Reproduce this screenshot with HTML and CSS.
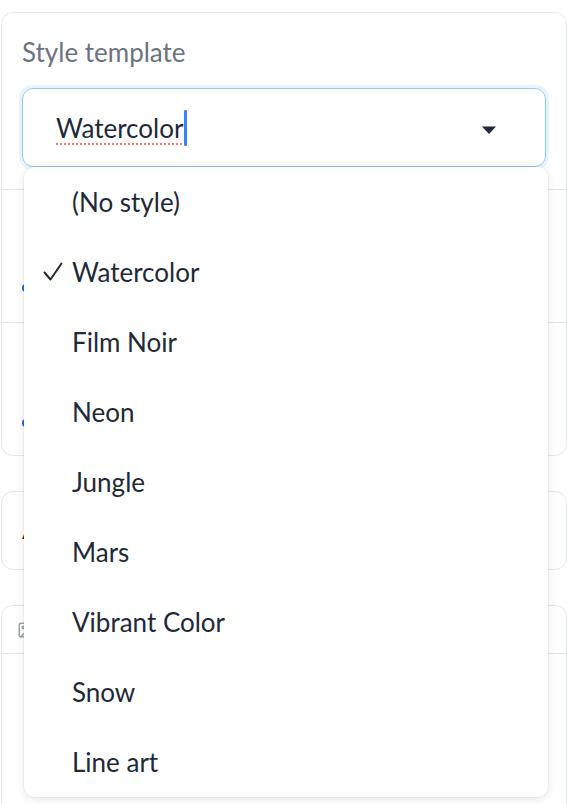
FILE: index.html
```html
<!DOCTYPE html>
<html lang="en">

<head>
  <meta charset="utf-8">
  <title>Style template</title>
  <link rel="stylesheet" href="styles.css">
</head>

<body>
  <div class="page">
    <div class="group">
      <div class="block block-select">
        <label class="block-label">Style template</label>
        <div class="select-wrap">
          <div class="select-input">
            <span class="select-value">Watercolor</span><span class="caret"></span>
            <svg class="select-arrow" width="16" height="9" viewBox="0 0 16 9">
              <path d="M1 0.5 L15 0.5 L8 8 Z" fill="#1f2937"/>
            </svg>
          </div>
          <ul class="menu">
            <li class="menu-item">(No style)</li>
            <li class="menu-item selected">
              <svg class="check" width="20" height="20" viewBox="0 0 20 20">
                <polyline points="1.5,10.5 7.5,17.5 18.5,1.5" fill="none" stroke="#1f2937" stroke-width="2" stroke-linecap="round" stroke-linejoin="round"/>
              </svg>
              Watercolor
            </li>
            <li class="menu-item">Film Noir</li>
            <li class="menu-item">Neon</li>
            <li class="menu-item">Jungle</li>
            <li class="menu-item">Mars</li>
            <li class="menu-item">Vibrant Color</li>
            <li class="menu-item">Snow</li>
            <li class="menu-item">Line art</li>
          </ul>
        </div>
      </div>
      <div class="block block-slider">
        <div class="slider-track"></div>
      </div>
      <div class="block block-slider">
        <div class="slider-track"></div>
      </div>
    </div>

    <div class="card card-accordion">
      <span class="accordion-title">Advanced options</span>
    </div>

    <div class="card card-image">
      <div class="image-label">
        <svg width="18" height="18" viewBox="0 0 24 24" fill="none" stroke="#9ca3af" stroke-width="2" stroke-linecap="round" stroke-linejoin="round">
          <rect x="3" y="3" width="18" height="18" rx="2"/>
          <circle cx="8.5" cy="8.5" r="1.5"/>
          <polyline points="21 15 16 10 5 21"/>
        </svg>
      </div>
    </div>
  </div>
</body>

</html>
```

FILE: styles.css
```css
* {
  box-sizing: border-box;
}

body {
  margin: 0;
  background: #fff;
  font-family: Lato, "Noto Sans", sans-serif;
  color: #1f2937;
  overflow: hidden;
}

.page {
  padding: 12px 0 0 1px;
}

.group,
.card {
  border: 1px solid #e5e7eb;
  border-radius: 12px;
  background: #fff;
}

.block {
  padding: 0 20px;
}

.block + .block {
  border-top: 1px solid #e5e7eb;
}

.block-select {
  padding-top: 24px;
  padding-bottom: 22px;
}

.block-label {
  display: block;
  height: 30px;
  line-height: 30px;
  font-size: 26px;
  color: #6b7280;
}

.select-wrap {
  position: relative;
  margin-top: 21px;
}

.select-input {
  display: flex;
  align-items: center;
  height: 79px;
  padding: 0 50px 0 33px;
  border: 1.5px solid #93c5fd;
  border-radius: 11px;
  box-shadow: 0 0 0 3px rgba(219, 234, 254, 0.6);
  font-size: 26px;
}

.select-value {
  text-decoration: underline dotted #f87171;
  text-decoration-thickness: 2px;
  text-underline-offset: 6px;
}

.caret {
  display: inline-block;
  width: 3px;
  height: 36px;
  margin-left: 1px;
  border-radius: 1px;
  background: #3b82f6;
}

.select-arrow {
  margin: 6px -2px 0 auto;
}

.menu {
  position: absolute;
  top: 100%;
  left: 2px;
  right: -2px;
  margin: 0;
  padding: 0;
  list-style: none;
  background: #fff;
  border-radius: 11px;
  box-shadow: 0 2px 10px rgba(0, 0, 0, 0.1), 0 0 0 1px rgba(0, 0, 0, 0.03);
  z-index: 10;
}

.menu-item {
  position: relative;
  display: flex;
  align-items: center;
  height: 70px;
  padding-left: 48px;
  font-size: 26px;
  color: #1f2937;
}

.check {
  position: absolute;
  left: 19px;
  top: 25px;
}

.block-slider {
  height: 133px;
  padding-top: 94px;
}

.slider-track {
  height: 8px;
  border-radius: 4px;
  background: #2563eb;
}

.block-slider + .block-slider {
  padding-top: 96px;
}

.card {
  margin-top: 35px;
}

.card-accordion {
  display: flex;
  align-items: center;
  height: 79px;
  padding: 0 20px;
  font-size: 22px;
}

.card-image {
  height: 220px;
}

.image-label {
  display: flex;
  align-items: center;
  height: 48px;
  padding: 0 15px;
  border-bottom: 1px solid #e5e7eb;
}
```
